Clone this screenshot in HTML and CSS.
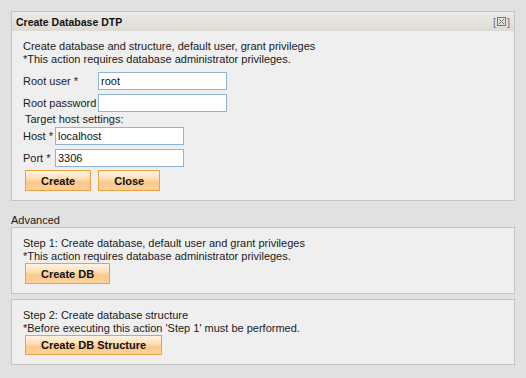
FILE: index.html
```html
<!DOCTYPE html>
<html>
<head>
<meta charset="utf-8">
<link rel="stylesheet" href="styles.css">
</head>
<body>
<div class="page">
  <div class="panel">
    <div class="panel-header">
      <span class="panel-title">Create Database DTP</span>
      <span class="panel-close">[<svg class="close-icon" width="9" height="9" viewBox="0 0 9 9"><rect x="0.5" y="0.5" width="8" height="8" fill="none" stroke="#777" stroke-width="1"/><path d="M2 2 L7 7 M7 2 L2 7" stroke="#777" stroke-width="1"/></svg>]</span>
    </div>
    <div class="panel-body">
      <div class="desc">Create database and structure, default user, grant privileges<br>*This action requires database administrator privileges.</div>
      <div class="form-row first">
        <label class="lbl lbl-wide">Root user *</label>
        <input class="inp" type="text" value="root">
      </div>
      <div class="form-row">
        <label class="lbl lbl-wide">Root password</label>
        <input class="inp" type="password" value="">
      </div>
      <div class="subhead">Target host settings:</div>
      <div class="form-row tight">
        <label class="lbl lbl-narrow">Host *</label>
        <input class="inp" type="text" value="localhost">
      </div>
      <div class="form-row">
        <label class="lbl lbl-narrow">Port *</label>
        <input class="inp" type="text" value="3306">
      </div>
      <div class="btn-row">
        <button class="btn">Create</button>
        <button class="btn">Close</button>
      </div>
    </div>
  </div>

  <div class="section-label">Advanced</div>

  <div class="panel step">
    <div class="panel-body">
      <div class="desc">Step 1: Create database, default user and grant privileges<br>*This action requires database administrator privileges.</div>
      <div class="btn-row close-row"><button class="btn">Create DB</button></div>
    </div>
  </div>

  <div class="panel step step2">
    <div class="panel-body">
      <div class="desc">Step 2: Create database structure<br>*Before executing this action 'Step 1' must be performed.</div>
      <div class="btn-row close-row"><button class="btn">Create DB Structure</button></div>
    </div>
  </div>
</div>
</body>
</html>
```

FILE: styles.css
```css
html, body {
  margin: 0;
  padding: 0;
  background: #e1e1e1;
}
body {
  font-family: "Liberation Sans", Arial, sans-serif;
  font-size: 11px;
  color: #1a1a1a;
}
.page {
  padding: 11px 11px 0 11px;
  display: flex;
  flex-direction: column;
}
.panel {
  border: 1px solid #c6c4bf;
  background: #efefef;
}
.panel-header {
  height: 19px;
  display: flex;
  align-items: center;
  justify-content: space-between;
  padding: 0 4px 0 4px;
  background: linear-gradient(#ecebe6, #dcdad3);
}
.panel-title {
  font-weight: bold;
  font-size: 10.5px;
  color: #111;
}
.panel-close {
  display: flex;
  align-items: center;
  gap: 1px;
  color: #777;
  font-size: 11px;
}
.close-icon {
  display: block;
}
.panel-body {
  padding: 9px 11px 9px 11px;
}
.desc {
  line-height: 12.5px;
}
.form-row {
  display: flex;
  align-items: center;
  height: 18px;
  margin-top: 4px;
}
.form-row.first {
  margin-top: 7px;
}
.form-row.tight {
  margin-top: 1px;
}
.lbl-wide {
  width: 75px;
}
.lbl-narrow {
  width: 32px;
}
.inp {
  box-sizing: border-box;
  width: 129px;
  height: 18px;
  border: 1px solid #8eb4d8;
  background: #fff;
  padding: 0 2px;
  margin: 0;
  font-family: "Liberation Sans", Arial, sans-serif;
  font-size: 11px;
  color: #111;
  outline: none;
}
.subhead {
  margin-left: 2px;
  margin-top: 1px;
  line-height: 13px;
}
.btn-row {
  display: flex;
  gap: 7px;
  margin-top: 3px;
  margin-left: 2px;
}
.close-row {
  margin-top: 1px;
}
.btn {
  box-sizing: border-box;
  height: 21px;
  padding: 0 15px;
  border: 1px solid #eea140;
  background: linear-gradient(#fff3e2 0%, #fee0b8 40%, #fbc88a 60%, #fcd29c 100%);
  font-family: "Liberation Sans", Arial, sans-serif;
  font-size: 11px;
  font-weight: bold;
  color: #111;
  margin: 0;
  cursor: pointer;
}
.section-label {
  margin-top: 12px;
  height: 14px;
  line-height: 14px;
}
.step .panel-body {
  padding: 9px 11px 9px 11px;
}
.step2 {
  margin-top: 5px;
}
.step2 .close-row {
  margin-top: 1px;
}
.step2 .btn {
  height: 20px;
}
```
